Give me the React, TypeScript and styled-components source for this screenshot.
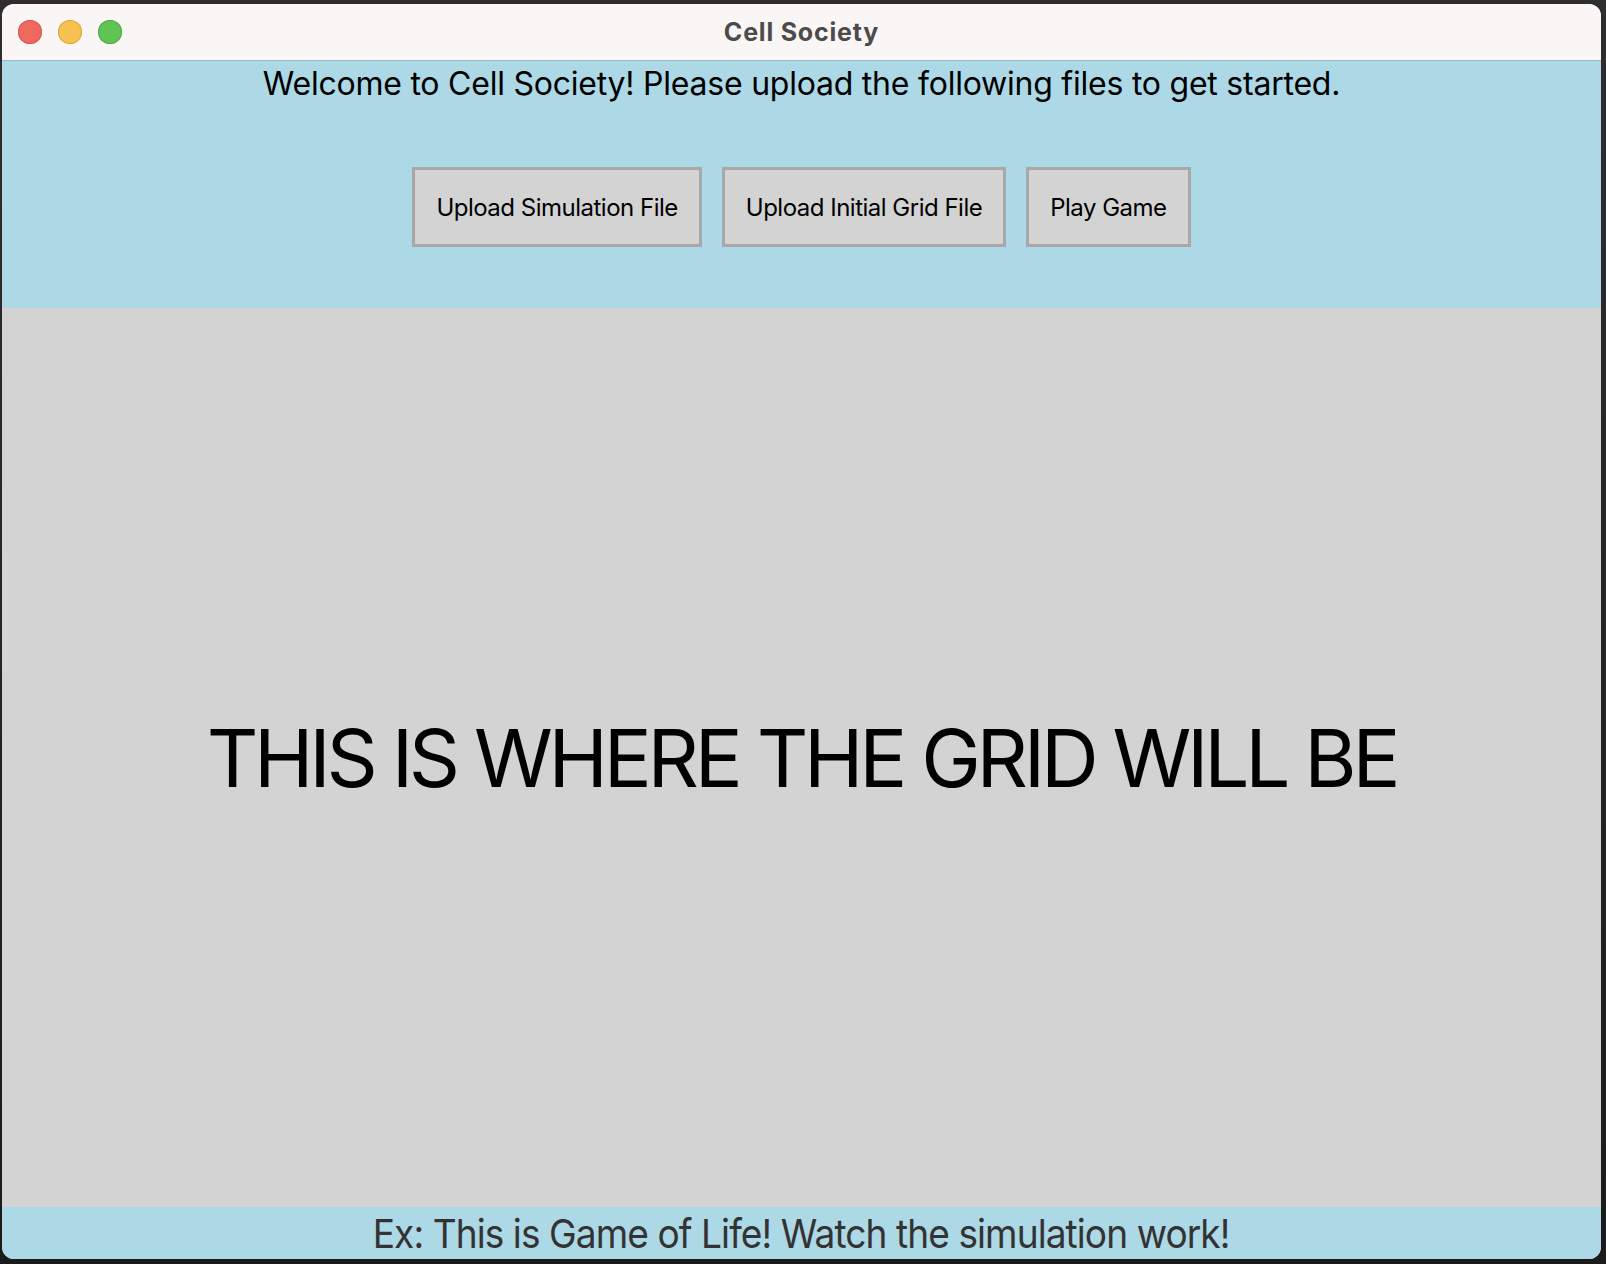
import React from "react";
import styled, { createGlobalStyle } from "styled-components";

const Global = createGlobalStyle`
  html, body { margin: 0; padding: 0; background: #232323; }
  body { width: 1606px; height: 1264px; overflow: hidden; }
  #root { width: 1606px; height: 1264px; }
`;

const Desktop = styled.div`
  width: 1606px;
  height: 1264px;
  padding: 4px 5px 5px 2px;
  box-sizing: border-box;
  background: linear-gradient(#2e2e2e, #1b1b1b);
  display: flex;
`;

const Window = styled.div`
  flex: 1;
  display: flex;
  flex-direction: column;
  border-radius: 12px;
  overflow: hidden;
  background: #add8e6;
  font-family: Inter, "Noto Sans", sans-serif;
`;

const TitleBar = styled.div`
  height: 56px;
  flex: none;
  background: #faf6f6;
  border-bottom: 1px solid #93bccb;
  display: flex;
  align-items: center;
  position: relative;
  padding-left: 16px;
  gap: 16px;
`;

const Light = styled.span<{ $c: string; $b: string }>`
  width: 24px;
  height: 24px;
  border-radius: 50%;
  background: ${(p) => p.$c};
  box-shadow: inset 0 0 0 1px ${(p) => p.$b};
`;

const Title = styled.div`
  position: absolute;
  left: 0;
  right: 0;
  top: 0;
  bottom: 0;
  display: flex;
  align-items: center;
  justify-content: center;
  font-weight: 700;
  font-size: 25px;
  letter-spacing: 0.8px;
  color: #4b4b4b;
  pointer-events: none;
`;

const Header = styled.div`
  height: 247px;
  flex: none;
  display: flex;
  flex-direction: column;
  align-items: center;
  background: #add8e6;
`;

const Welcome = styled.div`
  margin-top: 3px;
  font-size: 32px;
  color: #000;
  letter-spacing: -0.23px;
  line-height: 40px;
`;

const Buttons = styled.div`
  margin-top: 63px;
  display: flex;
  gap: 20px;
`;

const Button = styled.button`
  height: 80px;
  padding: 0 21px;
  background: #d3d3d3;
  border: 3px solid #a8a8a8;
  font-family: Inter, "Noto Sans", sans-serif;
  font-size: 24px;
  letter-spacing: -0.5px;
  color: #000;
`;

const GridArea = styled.div`
  flex: 1;
  background: #d3d3d3;
  display: flex;
  align-items: center;
  justify-content: center;
`;

const Placeholder = styled.div`
  font-size: 80px;
  color: #000;
  letter-spacing: -4.3px;
`;

const Footer = styled.div`
  height: 52px;
  flex: none;
  display: flex;
  align-items: center;
  justify-content: center;
  background: #add8e6;
`;

const FooterText = styled.div`
  font-size: 40px;
  color: #333;
  letter-spacing: -1px;
  transform: scaleX(0.927);
  white-space: nowrap;
`;

export default function App() {
  return (
    <>
      <Global />
      <Desktop>
        <Window>
          <TitleBar>
            <Light $c="#ee6a5f" $b="#d5574c" />
            <Light $c="#f6c150" $b="#dca63c" />
            <Light $c="#5fc454" $b="#4eaa42" />
            <Title>Cell Society</Title>
          </TitleBar>
          <Header>
            <Welcome>Welcome to Cell Society! Please upload the following files to get started.</Welcome>
            <Buttons>
              <Button>Upload Simulation File</Button>
              <Button>Upload Initial Grid File</Button>
              <Button>Play Game</Button>
            </Buttons>
          </Header>
          <GridArea>
            <Placeholder>THIS IS WHERE THE GRID WILL BE</Placeholder>
          </GridArea>
          <Footer>
            <FooterText>Ex: This is Game of Life! Watch the simulation work!</FooterText>
          </Footer>
        </Window>
      </Desktop>
    </>
  );
}
